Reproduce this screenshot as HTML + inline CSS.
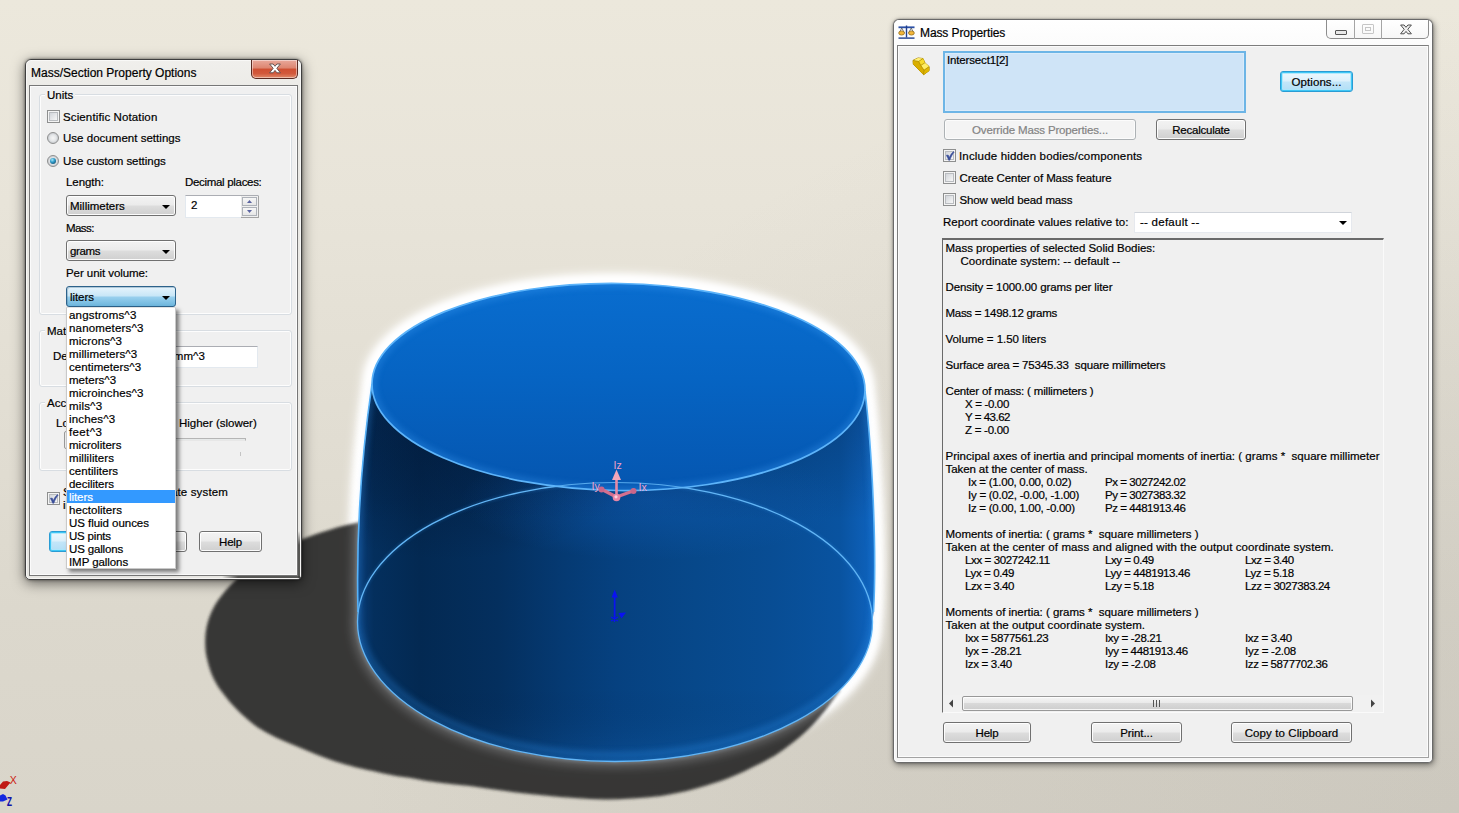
<!DOCTYPE html>
<html><head><meta charset="utf-8"><title>Mass Properties</title>
<style>
*{box-sizing:border-box}
html,body{margin:0;padding:0}
body{width:1459px;height:813px;overflow:hidden;position:relative;
 background:radial-gradient(ellipse 1100px 800px at 100% 100%,rgba(140,136,130,.17) 0%,rgba(140,136,130,.10) 50%,rgba(140,136,130,0) 100%),linear-gradient(180deg,#ece8dc 0%,#e8e4d9 25%,#e2ded3 50%,#dcd8cd 75%,#d9d5ca 100%);
 font-family:"Liberation Sans",sans-serif;font-size:11.5px;color:#000;-webkit-text-stroke:0.2px #000}
.abs{position:absolute}
.t{position:absolute;white-space:pre;line-height:13px;height:13px;font-size:11.5px;letter-spacing:0.05px}
.win{position:absolute;border-radius:6px 6px 5px 5px;border:1px solid #3f3f3f}
.win .hl{position:absolute;left:0;top:0;right:0;bottom:0;border:1px solid rgba(255,255,255,.85);border-radius:5px 5px 4px 4px}
.client{position:absolute;background:#f0f0f0;border:1px solid #777;box-shadow:inset 0 0 0 1px #fbfbfb}
.btn{position:absolute;border:1px solid #707070;border-radius:3px;
 background:linear-gradient(180deg,#f3f3f3 0%,#ebebeb 48%,#dddddd 52%,#cfcfcf 100%);
 box-shadow:inset 0 0 0 1px rgba(255,255,255,.9);text-align:center;font-size:11.5px;line-height:19px;padding-top:1px;white-space:pre}
.btn.def{border-color:#2a9cd4;box-shadow:inset 0 0 0 1px #3fc7f5,inset 0 0 0 2px rgba(170,230,252,.85);
 background:linear-gradient(180deg,#eef8fd 0%,#dcf0fb 48%,#c3e6f9 52%,#b2def6 100%)}
.btn.dis{border-color:#adb2b5;color:#838383;-webkit-text-stroke:0.2px #838383;background:#f4f4f4;box-shadow:inset 0 0 0 1px #fcfcfc}
.combo{position:absolute;border:1px solid #707070;border-radius:3px;
 background:linear-gradient(180deg,#f3f3f3 0%,#ebebeb 48%,#dddddd 52%,#cfcfcf 100%);
 box-shadow:inset 0 0 0 1px rgba(255,255,255,.9)}
.combo.hot{border-color:#2c628b;background:linear-gradient(180deg,#e6f4fc 0%,#c7e6f7 48%,#99d0ee 52%,#6db6dd 100%);
 box-shadow:inset 1px 1px 0 0 rgba(80,120,150,.35)}
.arr{position:absolute;width:0;height:0;border-left:4px solid transparent;border-right:4px solid transparent;border-top:4px solid #000}
.cb{position:absolute;width:13px;height:13px;border:1px solid #8e8f8f;background:#f4f4f4}
.cb i{position:absolute;left:1px;top:1px;width:9px;height:9px;border:1px solid #b9bcc0;background:linear-gradient(135deg,#d2d5da,#f7f7f7)}
.rb{position:absolute;width:12px;height:12px;border-radius:50%;border:1px solid #8e8f8f;
 background:radial-gradient(circle at 50% 50%,#f6f6f6 0%,#e4e6e8 45%,#c9ccd0 70%,#f2f2f2 100%)}
.gb{position:absolute;border:1px solid #d8dde2;border-radius:3px;box-shadow:inset 0 0 0 1px #fdfdfd}
.gbl{position:absolute;background:#f0f0f0;padding:0 2px;white-space:pre;line-height:13px;font-size:11.5px}
.edit{position:absolute;background:#fff;border:1px solid #e3e9ef;border-top-color:#abadb3}
</style></head>
<body>
<svg class="abs" style="left:0;top:0" width="1459" height="813" viewBox="0 0 1459 813">
<defs>
 <linearGradient id="side" gradientUnits="userSpaceOnUse" x1="358" y1="0" x2="876" y2="0">
  <stop offset="0" stop-color="#0a3d78"/>
  <stop offset="0.03" stop-color="#042f5d"/>
  <stop offset="0.12" stop-color="#032952"/>
  <stop offset="0.27" stop-color="#042f5e"/>
  <stop offset="0.40" stop-color="#053a73"/>
  <stop offset="0.50" stop-color="#064180"/>
  <stop offset="0.65" stop-color="#07488a"/>
  <stop offset="0.80" stop-color="#084d94"/>
  <stop offset="0.93" stop-color="#0953a0"/>
  <stop offset="1" stop-color="#0f64c0"/>
 </linearGradient>
 <linearGradient id="sideV" gradientUnits="userSpaceOnUse" x1="0" y1="390" x2="0" y2="762">
  <stop offset="0" stop-color="#000a20" stop-opacity="0.25"/>
  <stop offset="0.35" stop-color="#000a20" stop-opacity="0"/>
  <stop offset="0.8" stop-color="#000a20" stop-opacity="0"/>
  <stop offset="1" stop-color="#2080e0" stop-opacity="0.15"/>
 </linearGradient>
 <linearGradient id="topg" gradientUnits="userSpaceOnUse" x1="0" y1="283" x2="0" y2="490">
  <stop offset="0" stop-color="#096dcf"/>
  <stop offset="0.45" stop-color="#0664c3"/>
  <stop offset="1" stop-color="#0556b0"/>
 </linearGradient>
 <filter id="blur2" x="-10%" y="-10%" width="120%" height="120%"><feGaussianBlur stdDeviation="1.6"/></filter>
 <filter id="blur3" x="-10%" y="-10%" width="120%" height="120%"><feGaussianBlur stdDeviation="3"/></filter>
 <filter id="blur6" x="-10%" y="-10%" width="120%" height="120%"><feGaussianBlur stdDeviation="5"/></filter>
 <filter id="blur10" x="-20%" y="-20%" width="140%" height="140%"><feGaussianBlur stdDeviation="10"/></filter>
 <g id="bodyp">
  <path d="M372,384 C366,425 355.5,510 358,612 L358,622 L872.5,622 L873.5,612 C877,550 872,450 865,391 L618,300 Z"/>
  <ellipse cx="615" cy="622" rx="257.5" ry="139.5"/>
 </g>
 <path id="sil" d="M372,384 C366,425 355.5,510 358,612 M873.5,612 C877,550 872,450 865,391"/>
 <clipPath id="bodyclip">
  <path d="M372,384 C366,425 355.5,510 358,612 L358,622 L872.5,622 L873.5,612 C877,550 872,450 865,391 L618,300 Z"/>
  <ellipse cx="615" cy="622" rx="257.5" ry="139.5"/>
 </clipPath>
 <clipPath id="topclip2"><ellipse cx="618.5" cy="387" rx="246.5" ry="103.5" transform="rotate(0.8 618.5 387)"/></clipPath>
 <radialGradient id="lightspot"><stop offset="0" stop-color="#0f5fbd" stop-opacity="0.42"/><stop offset="0.5" stop-color="#0f5fbd" stop-opacity="0.22"/><stop offset="1" stop-color="#0f5fbd" stop-opacity="0"/></radialGradient>
 <radialGradient id="darkspot"><stop offset="0" stop-color="#021a3a" stop-opacity="0.5"/><stop offset="0.55" stop-color="#021a3a" stop-opacity="0.28"/><stop offset="1" stop-color="#021a3a" stop-opacity="0"/></radialGradient>
</defs>

<!-- white glow around body -->
<g filter="url(#blur6)">
 <use href="#bodyp" fill="#ffffff" stroke="#ffffff" stroke-width="20" stroke-linejoin="round"/>
 <ellipse cx="618.5" cy="387" rx="246.5" ry="103.5" fill="#fff" stroke="#fff" stroke-width="20" transform="rotate(0.8 618.5 387)"/>
</g>
<g filter="url(#blur3)">
 <use href="#bodyp" fill="#ffffff" stroke="#ffffff" stroke-width="13" stroke-linejoin="round"/>
 <ellipse cx="618.5" cy="387" rx="246.5" ry="103.5" fill="#fff" stroke="#fff" stroke-width="13" transform="rotate(0.8 618.5 387)"/>
</g>
<!-- ground shadow -->
<g opacity="0.9">
<path filter="url(#blur2)" fill="#282826" d="M360,522 C340,526 318,533 300,540 C270,552 240,572 222,595 C208,612 203,632 206,654 C209,670 214,682 222,692 C232,706 244,717 257,727 C270,735 283,741 296,746 C310,752 322,757 334,761 C350,766 362,769 373,771 C390,775 402,777 411,778 C430,782 450,784 470,786 C490,789 510,792 530,794 C550,796 570,798 590,799 C610,800 635,799 661,796 C680,793 695,789 708,785 C725,780 742,773 755,766 C768,760 778,754 787,747 C800,738 810,728 818,719 C824,712 827,708 830,704 L840,690 L700,500 L400,480 Z"/>
</g>
<!-- faint halo over the shadow -->
<g filter="url(#blur6)" opacity="0.22">
 <use href="#bodyp" fill="#ffffff" stroke="#ffffff" stroke-width="10" stroke-linejoin="round"/>
</g>
<g filter="url(#blur2)" opacity="0.18">
 <use href="#bodyp" fill="#bfe0ff" stroke="#bfe0ff" stroke-width="4" stroke-linejoin="round"/>
</g>
<!-- body -->
<use href="#bodyp" fill="url(#side)"/>
<use href="#bodyp" fill="url(#sideV)"/>
<g clip-path="url(#bodyclip)">
 <!-- darker band under top rim on left -->
 <ellipse cx="450" cy="450" rx="190" ry="110" fill="url(#darkspot)"/>
 <ellipse cx="650" cy="500" rx="190" ry="60" fill="url(#lightspot)"/>
 <!-- inner rim glow of silhouette -->
 <g fill="none" stroke="#2f8fe8" stroke-width="6" opacity="0.36" filter="url(#blur3)"><use href="#sil"/><path d="M358,612 L358,622 A257.5,139.5 0 0 0 872.5,622 L873.5,612"/></g>
 <!-- bottom ellipse glow -->
 <ellipse cx="615" cy="622" rx="257.5" ry="139.5" fill="none" stroke="#3a9cf0" stroke-width="3" opacity="0.22" filter="url(#blur2)"/>
</g>
<!-- bottom ellipse line -->
<ellipse cx="615" cy="622" rx="257.5" ry="139.5" fill="none" stroke="#63b6f6" stroke-width="1.3"/>
<!-- silhouette line -->
<use href="#sil" fill="none" stroke="#58b2f8" stroke-width="1.6"/>

<!-- top face -->
<g transform="rotate(0.8 618.5 387)">
 <ellipse cx="618.5" cy="387" rx="246.5" ry="103.5" fill="url(#topg)"/>
 <clipPath id="topclip"><ellipse cx="618.5" cy="387" rx="246.5" ry="103.5"/></clipPath>
 <g clip-path="url(#topclip)">
  <ellipse cx="618.5" cy="387" rx="246.5" ry="103.5" fill="none" stroke="#3a9af2" stroke-width="8" opacity="0.35" filter="url(#blur3)"/>
 </g>
  <ellipse cx="618.5" cy="387" rx="246.5" ry="103.5" fill="none" stroke="#5db4fa" stroke-width="1.7"/>
</g>

<!-- bottom ellipse seen through the top face -->
<g clip-path="url(#topclip2)"><ellipse cx="615" cy="622" rx="257.5" ry="139.5" fill="none" stroke="#63b6f6" stroke-width="1.2" opacity="0.85"/></g>
<!-- pink principal-axes triad -->
<g stroke-linecap="round">
 <line x1="616.5" y1="497" x2="602" y2="489.5" stroke="#d4708f" stroke-width="3.2"/>
 <line x1="616.5" y1="497" x2="633" y2="491" stroke="#d4708f" stroke-width="3.2"/>
 <circle cx="601.5" cy="489.5" r="3" fill="#c9668a"/>
 <circle cx="633.5" cy="491" r="3" fill="#c9668a"/>
 <line x1="616.5" y1="497" x2="616.5" y2="479" stroke="#e58aa6" stroke-width="2.6"/>
 <path d="M616.5,469.5 L621,480 L612,480 Z" fill="#f3a6ba"/>
 <circle cx="616.5" cy="497.5" r="3.8" fill="#e886a6"/>
 <circle cx="616" cy="496.8" r="1.6" fill="#ffd0dc"/>
</g>
<g font-family="Liberation Sans, sans-serif" font-size="10.5" fill="#f0a0c8">
 <text x="613.5" y="469">Iz</text>
 <text x="591.5" y="489.5">Iy</text>
 <text x="638.5" y="490.5">Ix</text>
</g>

<!-- blue origin triad -->
<g fill="#0a12f2" stroke="none">
 <rect x="613.8" y="596" width="1.7" height="23"/>
 <path d="M614.7,589.5 L617.8,597.5 L611.6,597.5 Z"/>
 <path d="M618.5,613 L626,612.5 L621.5,618.5 Z"/>
 <path d="M611,617 L618,621 M618,617 L611,621 M614.5,615.5 L614.5,622" stroke="#0a12f2" stroke-width="1.3"/>
</g>

<!-- corner view triad -->
<g>
 <path d="M0,785 L3,781.5 L7,781 L10.5,782.5 L7.5,786 L5,789 L0,788.5 Z" fill="#c01a14"/>
 <path d="M0,795.5 L3,794 L5.5,795.5 L7.5,799.5 L3,801.5 L0,801.5 Z" fill="#1428e0"/>
 <text x="9.8" y="783.8" font-family="Liberation Sans, sans-serif" font-size="10.5" fill="#cc1a10">X</text>
 <text transform="translate(6.8,805.8) scale(0.72,1)" font-family="Liberation Mono, monospace" font-weight="bold" font-size="12.5" fill="#1212a8">Z</text>
</g>
</svg>

<!-- ============ Mass/Section Property Options dialog ============ -->
<div class="win" id="optwin" style="left:25px;top:59px;width:277px;height:521px;background:linear-gradient(180deg,#f0efec 0%,#ecebe7 30px,#e8e7e3 100%);box-shadow:0 0 3px rgba(0,0,0,.5),0 3px 13px rgba(0,0,0,.55)">
 <div class="hl" style="border-color:rgba(255,255,255,.6)"></div>
 <div class="abs" style="left:5px;top:6px;font-size:12px;line-height:14px;white-space:pre">Mass/Section Property Options</div>
 <!-- close button -->
 <div class="abs" style="left:225px;top:0px;width:47px;height:19px;border:1px solid #5a2a22;border-top:none;border-radius:0 0 5px 5px;background:linear-gradient(180deg,#e9a99b 0%,#dd8570 45%,#cf4f32 50%,#d2593c 75%,#e08a6a 100%);box-shadow:inset 0 0 0 1px rgba(255,255,255,.45)">
  <svg class="abs" style="left:15px;top:2px" width="16" height="13" viewBox="0 0 16 13"><path d="M2.6,2 L6.1,2 L8,4.3 L9.9,2 L13.4,2 L9.8,6.3 L13.4,10.8 L9.9,10.8 L8,8.4 L6.1,10.8 L2.6,10.8 L6.2,6.3 Z" fill="#fff" stroke="#5b4a48" stroke-width="0.9" stroke-linejoin="round"/></svg>
 </div>
</div>
<div class="client" style="left:29px;top:85px;width:269px;height:491px"></div>

<!-- glass frame darkening where ground shadow shows through -->
<div class="abs" style="left:298px;top:531px;width:2px;height:47px;background:linear-gradient(180deg,rgba(70,70,68,0) 0,rgba(70,70,68,.9) 14px,rgba(70,70,68,.9) 100%)"></div>
<div class="abs" style="left:222px;top:576px;width:78px;height:2px;background:linear-gradient(90deg,rgba(70,70,68,0) 0,rgba(70,70,68,.9) 16px,rgba(70,70,68,.9) 100%)"></div>
<!-- Units group -->
<div class="gb" style="left:39px;top:94px;width:253px;height:221px"></div>
<div class="gbl" style="left:45px;top:89px">Units</div>

<div class="cb" style="left:47px;top:110px"><i></i></div>
<div class="t" style="left:63px;top:111px;letter-spacing:0.124px">Scientific Notation</div>
<div class="rb" style="left:47px;top:132px"></div>
<div class="t" style="left:63px;top:132px;letter-spacing:0.025px">Use document settings</div>
<div class="rb" style="left:47px;top:155px"><span class="abs" style="left:2px;top:2px;width:6px;height:6px;border-radius:50%;background:radial-gradient(circle at 38% 32%,#a8e6f6 0%,#2f9ccb 40%,#14506f 85%,#103a55 100%)"></span></div>
<div class="t" style="left:63px;top:155px;letter-spacing:-0.045px">Use custom settings</div>

<div class="t" style="left:66px;top:176px;letter-spacing:-0.068px">Length:</div>
<div class="t" style="left:185px;top:176px;letter-spacing:-0.311px">Decimal places:</div>
<div class="combo" style="left:66px;top:195px;width:110px;height:21px"><div class="t" style="left:3px;top:4px;letter-spacing:-0.014px">Millimeters</div><div class="arr" style="left:95px;top:9px"></div></div>
<div class="edit" style="left:185px;top:195px;width:74px;height:23px"><div class="t" style="left:5px;top:3px">2</div>
 <div class="abs" style="left:55px;top:0;width:18px;height:22px;background:#f0f0f0;border-right:1px solid #a3a3a3;border-bottom:1px solid #a3a3a3;box-shadow:inset 1px 0 0 #e9e9e9"></div>
 <div class="abs" style="left:56px;top:1px;width:15px;height:9px;border:1px solid #aeb2b9;background:linear-gradient(#f7f7f7,#e6e6e6)"><svg class="abs" style="left:4px;top:2px" width="5" height="3"><path d="M0,3 L2.5,0 L5,3 Z" fill="#5a63a0"/></svg></div>
 <div class="abs" style="left:56px;top:11px;width:15px;height:9px;border:1px solid #aeb2b9;background:linear-gradient(#f7f7f7,#e6e6e6)"><svg class="abs" style="left:4px;top:2px" width="5" height="3"><path d="M0,0 L2.5,3 L5,0 Z" fill="#5a63a0"/></svg></div>
</div>
<div class="t" style="left:66px;top:222px;letter-spacing:-0.554px">Mass:</div>
<div class="combo" style="left:66px;top:240px;width:110px;height:21px"><div class="t" style="left:3px;top:4px;letter-spacing:-0.391px">grams</div><div class="arr" style="left:95px;top:9px"></div></div>
<div class="t" style="left:66px;top:267px;letter-spacing:-0.069px">Per unit volume:</div>
<div class="combo hot" style="left:66px;top:286px;width:110px;height:21px"><div class="t" style="left:3px;top:4px;letter-spacing:-0.064px">liters</div><div class="arr" style="left:95px;top:9px"></div></div>

<!-- Material properties group -->
<div class="gb" style="left:39px;top:330px;width:253px;height:57px"></div>
<div class="gbl" style="left:45px;top:325px">Material properties</div>
<div class="t" style="left:53px;top:350px">Density:</div>
<div class="edit" style="left:100px;top:346px;width:158px;height:22px"><div class="t" style="left:18px;top:3px">0.00100 g/mm^3</div></div>

<!-- Accuracy level group -->
<div class="gb" style="left:39px;top:402px;width:253px;height:69px"></div>
<div class="gbl" style="left:45px;top:397px">Accuracy level</div>
<div class="t" style="left:56px;top:417px">Lower (faster)</div>
<div class="t" style="left:179px;top:417px;letter-spacing:-0.018px">Higher (slower)</div>
<div class="abs" style="left:68px;top:438px;width:178px;height:3px;border:1px solid #b5b5b5;border-bottom-color:#e7e7e7;background:#e7eaea"></div>
<div class="abs" style="left:64px;top:431px;width:10px;height:18px;border:1px solid #9a9a9a;border-radius:2px;background:linear-gradient(90deg,#f2f2f2,#d8d8d8)"></div>
<div class="abs" style="left:69px;top:452px;width:1px;height:4px;background:#c4c4c4"></div>
<div class="abs" style="left:240px;top:452px;width:1px;height:4px;background:#c4c4c4"></div>

<!-- checkbox show output coordinate system -->
<div class="cb" style="left:47px;top:492px"><i></i><svg class="abs" style="left:1px;top:1px" width="10" height="10" viewBox="0 0 10 10"><path d="M1.3,4.2 L3.2,4 L4.3,6.6 C5.2,4.2 6.5,2 8.6,0.6 L9.2,1.1 C7.4,3.2 6,6 4.9,9.2 L3.6,9.2 C3,7.4 2.3,5.8 1.3,4.2 Z" fill="#3b4f9a" stroke="#3b4f9a" stroke-width="0.5"/></svg></div>
<div class="t" style="left:63px;top:486px;letter-spacing:0.16px">Show output coordinate system</div>
<div class="t" style="left:63px;top:499px">in corner of window</div>

<!-- buttons -->
<div class="btn def" style="left:49px;top:531px;width:64px;height:21px">OK</div>
<div class="btn" style="left:123px;top:531px;width:64px;height:21px">Cancel</div>
<div class="btn" style="left:199px;top:531px;width:63px;height:21px;letter-spacing:-0.164px">Help</div>

<!-- dropdown list -->
<div class="abs" id="ddlist" style="left:66px;top:307px;width:110px;height:262px;border:1px solid #c9c9c9;border-top-color:#e2e2e2;background:#fff;box-shadow:3px 3px 4px rgba(0,0,0,.5)">
<div class="t" style="left:2px;top:1px;letter-spacing:0.183px">angstroms^3</div>
<div class="t" style="left:2px;top:14px;letter-spacing:0.172px">nanometers^3</div>
<div class="t" style="left:2px;top:27px;letter-spacing:0.115px">microns^3</div>
<div class="t" style="left:2px;top:40px;letter-spacing:0.127px">millimeters^3</div>
<div class="t" style="left:2px;top:53px;letter-spacing:0.082px">centimeters^3</div>
<div class="t" style="left:2px;top:66px;letter-spacing:0.018px">meters^3</div>
<div class="t" style="left:2px;top:79px;letter-spacing:0.111px">microinches^3</div>
<div class="t" style="left:2px;top:92px;letter-spacing:0.161px">mils^3</div>
<div class="t" style="left:2px;top:105px;letter-spacing:0.169px">inches^3</div>
<div class="t" style="left:2px;top:118px;letter-spacing:0.369px">feet^3</div>
<div class="t" style="left:2px;top:131px;letter-spacing:0.001px">microliters</div>
<div class="t" style="left:2px;top:144px;letter-spacing:0.091px">milliliters</div>
<div class="t" style="left:2px;top:157px;letter-spacing:0.047px">centiliters</div>
<div class="t" style="left:2px;top:170px;letter-spacing:-0.049px">deciliters</div>
<div class="abs" style="left:0;top:182px;width:108px;height:13px;background:#3399ff"></div>
<div class="t" style="left:2px;top:183px;color:#fff;-webkit-text-stroke:0.2px #fff;letter-spacing:-0.064px">liters</div>
<div class="t" style="left:2px;top:196px;letter-spacing:0.053px">hectoliters</div>
<div class="t" style="left:2px;top:209px;letter-spacing:-0.043px">US fluid ounces</div>
<div class="t" style="left:2px;top:222px;letter-spacing:-0.196px">US pints</div>
<div class="t" style="left:2px;top:235px;letter-spacing:-0.163px">US gallons</div>
<div class="t" style="left:2px;top:248px;letter-spacing:-0.072px">IMP gallons</div>
</div>

<!-- ============ Mass Properties dialog ============ -->
<div class="win" id="mpwin" style="left:893px;top:19px;width:540px;height:744px;background:linear-gradient(180deg,#ffffff 0%,#fbfbfb 30px,#f6f6f6 100%);border-color:rgba(70,70,70,.8);box-shadow:0 0 2px rgba(0,0,0,.4),1px 2px 6px rgba(0,0,0,.45)">
 <div class="hl"></div>
 <!-- title icon: balance scale -->
 <svg class="abs" style="left:4px;top:5px" width="17" height="15" viewBox="0 0 17 15">
  <rect x="0.5" y="1.4" width="16" height="1.8" fill="#2a4fa5"/>
  <rect x="7.8" y="0.5" width="1.4" height="12" fill="#1f3f8f"/>
  <rect x="0.5" y="12.4" width="16" height="1.4" fill="#1f3f8f"/>
  <path d="M3.8,3 L1.2,8 M3.8,3 L6.4,8 M13.2,3 L10.6,8 M13.2,3 L15.8,8" stroke="#4a4a4a" stroke-width="0.7" fill="none"/>
  <ellipse cx="3.6" cy="8" rx="2.9" ry="2.1" fill="#f3b63a" stroke="#8a6414" stroke-width="0.7"/>
  <ellipse cx="13.4" cy="8" rx="2.9" ry="2.1" fill="#f3b63a" stroke="#8a6414" stroke-width="0.7"/>
 </svg>
 <div class="abs" style="left:26px;top:6px;font-size:12px;line-height:14px;white-space:pre;letter-spacing:-0.1px">Mass Properties</div>
 <!-- caption buttons -->
 <div class="abs" style="left:432px;top:0px;width:103px;height:19px;border:1px solid #8d8d8d;border-top:none;border-radius:0 0 5px 5px;background:linear-gradient(180deg,#ffffff,#f7f7f7)">
  <div class="abs" style="left:27px;top:0;width:1px;height:19px;background:#a5a5a5"></div>
  <div class="abs" style="left:54px;top:0;width:1px;height:19px;background:#a5a5a5"></div>
  <div class="abs" style="left:8px;top:10px;width:12px;height:5px;border:1px solid #555;border-radius:1px;background:#e8e8e8"></div>
  <div class="abs" style="left:35px;top:4px;width:12px;height:10px;border:1px solid #c6c6c6;border-radius:1px"></div>
  <div class="abs" style="left:38px;top:7px;width:6px;height:4px;border:1px solid #c6c6c6"></div>
  <svg class="abs" style="left:71px;top:3px" width="16" height="13" viewBox="0 0 16 13"><path d="M2.6,2 L6.1,2 L8,4.3 L9.9,2 L13.4,2 L9.8,6.3 L13.4,10.8 L9.9,10.8 L8,8.4 L6.1,10.8 L2.6,10.8 L6.2,6.3 Z" fill="#f0f0f0" stroke="#4f4f4f" stroke-width="1" stroke-linejoin="round"/></svg>
 </div>
</div>
<div class="client" style="left:897px;top:45px;width:532px;height:713px;border-color:#7d7d7d #a2a2a2 #a2a2a2 #7d7d7d"></div>

<!-- selection icon -->
<svg class="abs" style="left:912px;top:56px" width="18" height="20" viewBox="0 0 18 20">
 <path d="M1,4.4 L6,2 L11,2.5 L12.9,6.8 L17.1,10.6 L17.1,14.7 L11.6,18.7 L1.3,8.2 Z" fill="#ecc80c" stroke="#a98600" stroke-width="1" stroke-linejoin="round"/>
 <path d="M1,4.4 L6,2 L11,2.5 L6.6,5.4 Z" fill="#fff07a"/>
 <path d="M6.6,5.4 L11,2.5 L12.9,6.8 L8.8,9.4 Z" fill="#f7dc2c"/>
 <path d="M8.8,9.4 L12.9,6.8 L17.1,10.6 L12,14.2 Z" fill="#ffee66"/>
 <path d="M12,14.2 L17.1,10.6 L17.1,14.7 L11.6,18.7 Z" fill="#e2b800"/>
 <path d="M1,4.4 L6.6,5.4 L8.8,9.4 L12,14.2 L11.6,18.7 L1.3,8.2 Z" fill="#d9ae00"/>
 <path d="M1,4.4 L6.6,5.4 L11,2.5 M6.6,5.4 L8.8,9.4 L12.9,6.8 M8.8,9.4 L12,14.2 L17.1,10.6 M12,14.2 L11.6,18.7" fill="none" stroke="#a98600" stroke-width="0.7"/>
</svg>
<!-- selection list box -->
<div class="abs" style="left:943px;top:51px;width:303px;height:62px;border:2px solid #6db5e6;background:#cfe4f7;box-shadow:inset 0 0 0 1px #d9ebfa"></div>
<div class="t" style="left:947px;top:53.5px;letter-spacing:-0.154px">Intersect1[2]</div>
<div class="btn def" style="left:1280px;top:71px;width:73px;height:21px;letter-spacing:0.078px">Options...</div>
<div class="btn dis" style="left:944px;top:119px;width:192px;height:21px;letter-spacing:-0.147px">Override Mass Properties...</div>
<div class="btn" style="left:1156px;top:119px;width:90px;height:21px;letter-spacing:-0.236px">Recalculate</div>

<div class="cb" style="left:943px;top:149px"><i></i><svg class="abs" style="left:1px;top:1px" width="10" height="10" viewBox="0 0 10 10"><path d="M1.3,4.2 L3.2,4 L4.3,6.6 C5.2,4.2 6.5,2 8.6,0.6 L9.2,1.1 C7.4,3.2 6,6 4.9,9.2 L3.6,9.2 C3,7.4 2.3,5.8 1.3,4.2 Z" fill="#3b4f9a" stroke="#3b4f9a" stroke-width="0.5"/></svg></div>
<div class="t" style="left:959px;top:149.5px;letter-spacing:0.173px">Include hidden bodies/components</div>
<div class="cb" style="left:943px;top:171px"><i></i></div>
<div class="t" style="left:959.5px;top:171.5px;letter-spacing:-0.093px">Create Center of Mass feature</div>
<div class="cb" style="left:943px;top:193px"><i></i></div>
<div class="t" style="left:959.5px;top:193.5px;letter-spacing:-0.114px">Show weld bead mass</div>
<div class="t" style="left:943px;top:216px;letter-spacing:0.035px">Report coordinate values relative to:</div>
<div class="edit" style="left:1134px;top:212px;width:218px;height:21px;border-color:#e6e9ee;border-top-color:#d0d4da"><div class="t" style="left:5px;top:3px;letter-spacing:0.25px">-- default --</div><div class="arr" style="left:204px;top:8px"></div></div>

<!-- results text box -->
<div class="abs" style="left:942px;top:238px;width:442px;height:475px;border-left:1px solid #6a6a6a;border-top:2px solid #6a6a6a;border-right:1px solid #fafafa;border-bottom:1px solid #fafafa;background:#f0f0f0"></div>
<div class="t" style="left:945.5px;top:242px;letter-spacing:-0.031px">Mass properties of selected Solid Bodies:</div>
<div class="t" style="left:960.5px;top:255px;letter-spacing:0.031px">Coordinate system: -- default --</div>
<div class="t" style="left:945.5px;top:281px;letter-spacing:-0.085px">Density = 1000.00 grams per liter</div>
<div class="t" style="left:945.5px;top:307px;letter-spacing:-0.295px">Mass = 1498.12 grams</div>
<div class="t" style="left:945.5px;top:333px;letter-spacing:-0.031px">Volume = 1.50 liters</div>
<div class="t" style="left:945.5px;top:359px;letter-spacing:-0.158px">Surface area = 75345.33  square millimeters</div>
<div class="t" style="left:945.5px;top:385px;letter-spacing:-0.173px">Center of mass: ( millimeters )</div>
<div class="t" style="left:965px;top:398px;letter-spacing:-0.333px">X = -0.00</div>
<div class="t" style="left:965px;top:411px;letter-spacing:-0.484px">Y = 43.62</div>
<div class="t" style="left:965px;top:424px;letter-spacing:-0.26px">Z = -0.00</div>
<div class="t" style="left:945.5px;top:450px;letter-spacing:0.022px">Principal axes of inertia and principal moments of inertia: ( grams *  square millimeter</div>
<div class="t" style="left:945.5px;top:463px;letter-spacing:-0.088px">Taken at the center of mass.</div>
<div class="t" style="left:968px;top:476px;letter-spacing:-0.276px">Ix = (1.00, 0.00, 0.02)</div>
<div class="t" style="left:1105px;top:476px;letter-spacing:-0.453px">Px = 3027242.02</div>
<div class="t" style="left:968px;top:489px;letter-spacing:-0.252px">Iy = (0.02, -0.00, -1.00)</div>
<div class="t" style="left:1105px;top:489px;letter-spacing:-0.453px">Py = 3027383.32</div>
<div class="t" style="left:968px;top:502px;letter-spacing:-0.282px">Iz = (0.00, 1.00, -0.00)</div>
<div class="t" style="left:1105px;top:502px;letter-spacing:-0.453px">Pz = 4481913.46</div>
<div class="t" style="left:945.5px;top:528px;letter-spacing:-0.027px">Moments of inertia: ( grams *  square millimeters )</div>
<div class="t" style="left:945.5px;top:541px;letter-spacing:0.091px">Taken at the center of mass and aligned with the output coordinate system.</div>
<div class="t" style="left:965px;top:554px;letter-spacing:-0.382px">Lxx = 3027242.11</div>
<div class="t" style="left:1105px;top:554px;letter-spacing:-0.459px">Lxy = 0.49</div>
<div class="t" style="left:1245px;top:554px;letter-spacing:-0.469px">Lxz = 3.40</div>
<div class="t" style="left:965px;top:567px;letter-spacing:-0.397px">Lyx = 0.49</div>
<div class="t" style="left:1105px;top:567px;letter-spacing:-0.403px">Lyy = 4481913.46</div>
<div class="t" style="left:1245px;top:567px;letter-spacing:-0.427px">Lyz = 5.18</div>
<div class="t" style="left:965px;top:580px;letter-spacing:-0.439px">Lzx = 3.40</div>
<div class="t" style="left:1105px;top:580px;letter-spacing:-0.459px">Lzy = 5.18</div>
<div class="t" style="left:1245px;top:580px;letter-spacing:-0.435px">Lzz = 3027383.24</div>
<div class="t" style="left:945.5px;top:606px;letter-spacing:-0.027px">Moments of inertia: ( grams *  square millimeters )</div>
<div class="t" style="left:945.5px;top:619px;letter-spacing:0.054px">Taken at the output coordinate system.</div>
<div class="t" style="left:965px;top:632px;letter-spacing:-0.329px">Ixx = 5877561.23</div>
<div class="t" style="left:1105px;top:632px;letter-spacing:-0.327px">Ixy = -28.21</div>
<div class="t" style="left:1245px;top:632px;letter-spacing:-0.329px">Ixz = 3.40</div>
<div class="t" style="left:965px;top:645px;letter-spacing:-0.335px">Iyx = -28.21</div>
<div class="t" style="left:1105px;top:645px;letter-spacing:-0.366px">Iyy = 4481913.46</div>
<div class="t" style="left:1245px;top:645px;letter-spacing:-0.283px">Iyz = -2.08</div>
<div class="t" style="left:965px;top:658px;letter-spacing:-0.329px">Izx = 3.40</div>
<div class="t" style="left:1105px;top:658px;letter-spacing:-0.311px">Izy = -2.08</div>
<div class="t" style="left:1245px;top:658px;letter-spacing:-0.373px">Izz = 5877702.36</div>
<!-- horizontal scrollbar -->
<div class="abs" style="left:943px;top:695px;width:440px;height:17px;background:#f1f1f1">
 <svg class="abs" style="left:5px;top:4px" width="6" height="9"><path d="M5,0.5 L1,4.5 L5,8.5 Z" fill="#444"/></svg>
 <svg class="abs" style="left:427px;top:4px" width="6" height="9"><path d="M1,0.5 L5,4.5 L1,8.5 Z" fill="#444"/></svg>
 <div class="abs" style="left:19px;top:1px;width:391px;height:15px;border:1px solid #989898;border-radius:2px;background:linear-gradient(180deg,#f5f5f5 0%,#eaeaea 45%,#d9d9d9 50%,#cdcdcd 100%);box-shadow:inset 0 0 0 1px rgba(255,255,255,.8)">
  <div class="abs" style="left:190px;top:3px;width:1px;height:7px;background:#555"></div>
  <div class="abs" style="left:193px;top:3px;width:1px;height:7px;background:#555"></div>
  <div class="abs" style="left:196px;top:3px;width:1px;height:7px;background:#555"></div>
 </div>
</div>
<div class="btn" style="left:943px;top:722px;width:88px;height:21px;letter-spacing:-0.164px">Help</div>
<div class="btn" style="left:1091px;top:722px;width:91px;height:21px;letter-spacing:-0.092px">Print...</div>
<div class="btn" style="left:1231px;top:722px;width:121px;height:21px;letter-spacing:0.096px">Copy to Clipboard</div>

</body></html>
